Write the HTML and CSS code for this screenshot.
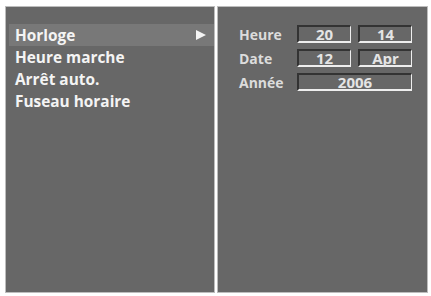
FILE: index.html
```html
<!DOCTYPE html>
<html lang="fr">
<head>
  <meta charset="UTF-8">
  <title>Horloge</title>
  <link rel="stylesheet" href="styles.css">
</head>
<body>
  <div class="screen">
    <div class="panel menu">
      <div class="item active">Horloge <span class="arrow"></span></div>
      <div class="item">Heure marche</div>
      <div class="item">Arrêt auto.</div>
      <div class="item">Fuseau horaire</div>
    </div>

    <div class="panel settings">
      <div class="row">
        <span class="label">Heure</span>
        <span class="field">20</span>
        <span class="field">14</span>
      </div>
      <div class="row">
        <span class="label">Date</span>
        <span class="field">12</span>
        <span class="field">Apr</span>
      </div>
      <div class="row">
        <span class="label">Année</span>
        <span class="field wide">2006</span>
      </div>
    </div>
  </div>
</body>
</html>
```

FILE: styles.css
```css
body {
  margin: 0;
  background-color: #fff;
  font-family: 'Open Sans', Arial, sans-serif;
  font-weight: bold;
}

.screen {
  display: flex;
  gap: 2px;
  padding: 6px 0 0 5px;
}

.panel {
  height: 287px;
  background-color: #676767;
  border: 1px solid #bdbdbd;
  box-sizing: border-box;
}

.menu {
  width: 210px;
  padding-top: 17px;
  padding-left: 3px;
}

.item {
  height: 22px;
  line-height: 23px;
  padding-left: 6px;
  padding-right: 8px;
  font-size: 15.4px;
  color: #f4f4f4;
}

.item.active {
  background-color: #787878;
  display: flex;
  justify-content: space-between;
  align-items: center;
}

.arrow {
  width: 0;
  height: 0;
  border-top: 5px solid transparent;
  border-bottom: 5px solid transparent;
  border-left: 10px solid #f4f4f4;
}

.settings {
  width: 211px;
  padding: 18px 0 0 21px;
}

.row {
  display: flex;
  align-items: center;
  height: 18px;
  margin-bottom: 6px;
}

.label {
  width: 58px;
  font-size: 14px;
  color: #dcdcdc;
}

.field {
  width: 54px;
  height: 18px;
  box-sizing: border-box;
  margin-right: 7px;
  border-top: 2px solid #333;
  border-left: 2px solid #333;
  border-bottom: 2px solid #eee;
  border-right: 1px solid #eee;
  text-align: center;
  line-height: 14px;
  font-size: 15px;
  color: #e4e4e4;
}

.field.wide {
  width: 115px;
}
```
